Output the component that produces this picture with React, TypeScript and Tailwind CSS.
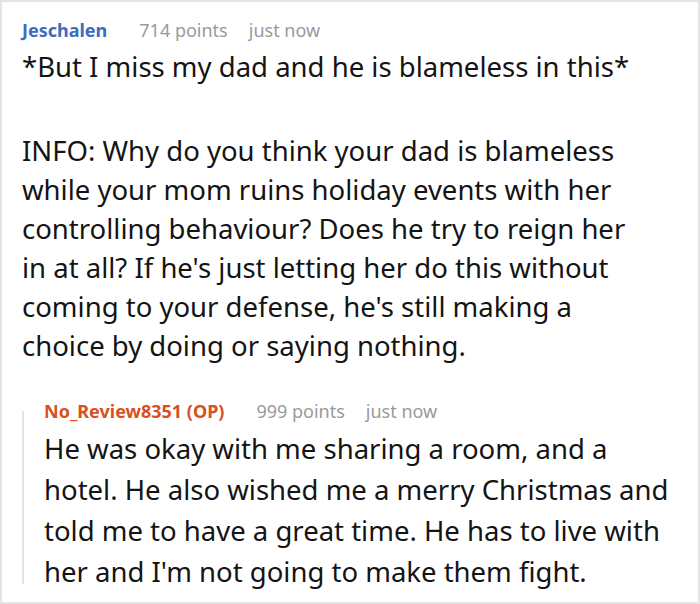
import React from "react";

const mainLines = [
  "INFO: Why do you think your dad is blameless",
  "while your mom ruins holiday events with her",
  "controlling behaviour? Does he try to reign her",
  "in at all? If he's just letting her do this without",
  "coming to your defense, he's still making a",
  "choice by doing or saying nothing.",
];

const replyLines = [
  "He was okay with me sharing a room, and a",
  "hotel. He also wished me a merry Christmas and",
  "told me to have a great time. He has to live with",
  "her and I'm not going to make them fight.",
];

export default function App() {
  return (
    <div
      className="w-[700px] h-[604px] bg-white border-2 border-[#e4e4e4] overflow-hidden"
      style={{ fontFamily: '"Noto Sans", sans-serif' }}
    >
      <div className="pl-[20px] pr-2 pt-[16px]">
        <div className="flex items-baseline text-[18px] leading-[24px] whitespace-nowrap">
          <span className="font-bold text-[#3d6bbd]">Jeschalen</span>
          <span className="ml-[32px] text-[#9a9a9a]">714 points</span>
          <span className="ml-[21px] text-[#9a9a9a]">just now</span>
        </div>
        <div className="mt-[5px] text-[27.5px] leading-[39px] text-[#141414] whitespace-nowrap">
          <p className="mb-[45px]">*But I miss my dad and he is blameless in this*</p>
          <p>
            {mainLines.map((l, i) => (
              <React.Fragment key={i}>
                {l}
                {i < mainLines.length - 1 && <br />}
              </React.Fragment>
            ))}
          </p>
        </div>
        <div className="mt-[34px] flex">
          <div className="w-[2px] bg-[#e4e4e4] mt-[12px] mb-[8px] shrink-0" />
          <div className="pl-[20px]">
            <div className="flex items-baseline text-[18px] leading-[24px] whitespace-nowrap">
              <span className="font-bold text-[#d9501e]">No_Review8351 (OP)</span>
              <span className="ml-[32px] text-[#9a9a9a]">999 points</span>
              <span className="ml-[21px] text-[#9a9a9a]">just now</span>
            </div>
            <p className="mt-[5px] text-[27.5px] leading-[41px] text-[#141414] whitespace-nowrap">
              {replyLines.map((l, i) => (
                <React.Fragment key={i}>
                  {l}
                  {i < replyLines.length - 1 && <br />}
                </React.Fragment>
              ))}
            </p>
          </div>
        </div>
      </div>
    </div>
  );
}
